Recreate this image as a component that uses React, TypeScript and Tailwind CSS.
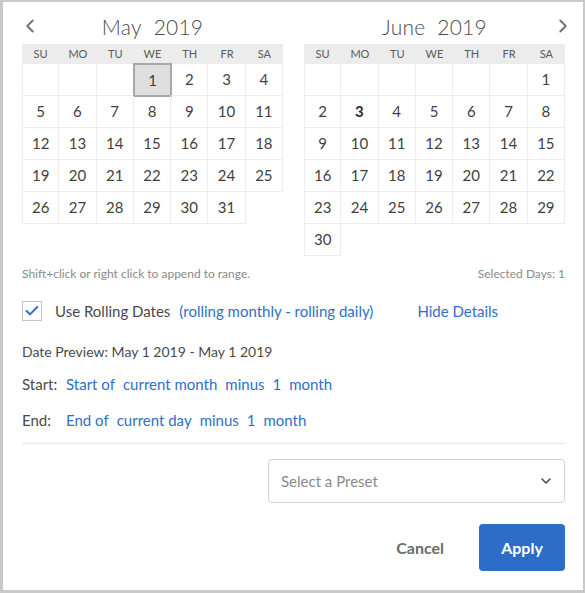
import { Check, ChevronDown, ChevronLeft, ChevronRight } from "lucide-react";

const DAYS = ["SU", "MO", "TU", "WE", "TH", "FR", "SA"];

type MonthProps = {
  title: string;
  year: string;
  offset: number;
  length: number;
  selected?: number;
  today?: number;
  nav: "left" | "right";
};

function Month({ title, year, offset, length, selected, today, nav }: MonthProps) {
  const slots: (number | null)[] = [];
  for (let i = 0; i < offset; i++) slots.push(null);
  for (let d = 1; d <= length; d++) slots.push(d);

  return (
    <div className="w-[261px]">
      <div className="relative h-[42px] flex items-center justify-center">
        {nav === "left" && (
          <ChevronLeft className="absolute left-[-3px] top-[13px] w-[22px] h-[22px] text-[#707070]" strokeWidth={2} />
        )}
        <span className="text-[21px] font-light text-[#4b4b4b] tracking-[0.2px] mt-[7px]">
          {title}
          <span className="ml-[12px]">{year}</span>
        </span>
        {nav === "right" && (
          <ChevronRight className="absolute right-[-9px] top-[13px] w-[22px] h-[22px] text-[#707070]" strokeWidth={2} />
        )}
      </div>
      <div className="grid grid-cols-7 bg-[#ececec] h-[20px]">
        {DAYS.map((d) => (
          <div key={d} className="flex items-center justify-center text-[11px] text-[#5a5a5a]">
            {d}
          </div>
        ))}
      </div>
      <div className="grid grid-cols-7">
        {slots.map((d, i) => {
          const isSel = d === selected;
          return (
            <div
              key={i}
              className={`h-[32px] flex items-center justify-center text-[15px] border-b border-r ${
                i % 7 === 0 ? "border-l" : ""
              } ${isSel ? "bg-[#dedede] border-[#a8a8a8] border outline outline-1 outline-[#a8a8a8]" : "border-[#ececec]"} ${
                d === today ? "font-bold text-[#2c2c2c]" : "text-[#3f3f3f]"
              }`}
            >
              {d ?? ""}
            </div>
          );
        })}
      </div>
    </div>
  );
}

export default function App() {
  const link = "text-[#2f6fc6]";
  return (
    <div
      className="w-[585px] h-[593px] bg-white border-t-2 border-l-[3px] border-r-2 border-b-[3px] border-[#c9c9c9] text-[#444]"
      style={{ fontFamily: "Lato, 'Noto Sans', sans-serif" }}
    >
      <div className="pl-[19px] pr-[18px]">
        <div className="flex gap-[21px]">
          <Month title="May" year="2019" offset={3} length={31} selected={1} nav="left" />
          <Month title="June" year="2019" offset={6} length={30} today={3} nav="right" />
        </div>

        <div className="flex justify-between mt-[9px] text-[12px] text-[#8a8a8a]">
          <span>Shift+click or right click to append to range.</span>
          <span>Selected Days: 1</span>
        </div>

        <div className="flex items-center mt-[18px] h-[20px] text-[15px]">
          <div className="w-[20px] h-[20px] border border-[#c4c4c4] flex items-center justify-center">
            <Check className="w-[16px] h-[16px] text-[#2f6fc6]" strokeWidth={3} />
          </div>
          <span className="ml-[13px] text-[#4a4a4a]">Use Rolling Dates</span>
          <span className={`ml-[9px] ${link}`}>(rolling monthly - rolling daily)</span>
          <span className={`ml-[44px] ${link}`}>Hide Details</span>
        </div>

        <div className="mt-[20px] text-[14px] text-[#4a4a4a]">Date Preview: May 1 2019 - May 1 2019</div>

        <div className="mt-[11px] flex text-[15px]">
          <span className="w-[44px] text-[#4a4a4a]">Start:</span>
          <span className={`${link} flex gap-[8px]`}>
            <span>Start of</span>
            <span>current month</span>
            <span>minus</span>
            <span>1</span>
            <span>month</span>
          </span>
        </div>

        <div className="mt-[13px] flex text-[15px]">
          <span className="w-[44px] text-[#4a4a4a]">End:</span>
          <span className={`${link} flex gap-[8px]`}>
            <span>End of</span>
            <span>current day</span>
            <span>minus</span>
            <span>1</span>
            <span>month</span>
          </span>
        </div>

        <div className="mt-[12px] border-t border-[#e6e6e6]" />

        <div className="flex justify-end mt-[15px]">
          <div className="w-[297px] h-[44px] border border-[#d2d2d2] rounded-[4px] flex items-center justify-between pl-[12px] pr-[10px]">
            <span className="text-[15px] text-[#8a8a8a]">Select a Preset</span>
            <ChevronDown className="w-[16px] h-[16px] text-[#444]" strokeWidth={2.2} />
          </div>
        </div>

        <div className="flex justify-end items-center mt-[21px]">
          <span className="text-[16px] font-bold text-[#6b6b6b] mr-[35px]">Cancel</span>
          <div className="w-[86px] h-[47px] rounded-[4px] bg-[#2d6dca] flex items-center justify-center text-[16px] font-bold text-white">
            Apply
          </div>
        </div>
      </div>
    </div>
  );
}
